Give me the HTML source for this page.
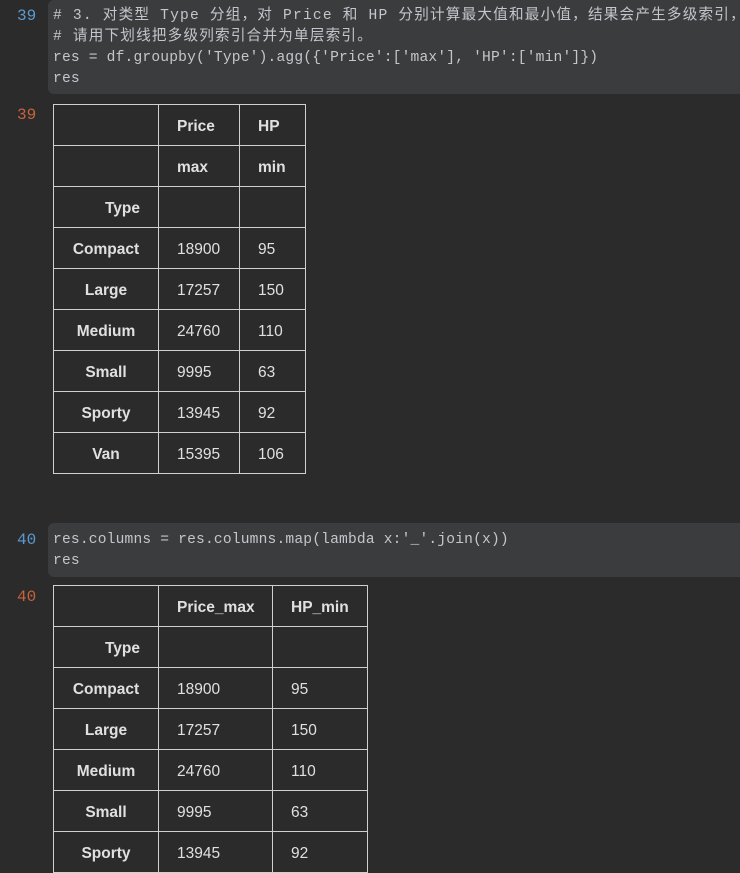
<!DOCTYPE html>
<html><head><meta charset="utf-8"><style>
body{margin:0;background:#2b2b2b;width:740px;height:847px;overflow:hidden;position:relative;font-family:"Liberation Sans","Noto Sans CJK SC",sans-serif}
.code{position:absolute;left:48px;right:0;background:#3b3c3e;border-radius:6px 0 0 6px;font-family:"Liberation Mono","Noto Sans CJK SC",monospace;font-size:14.6px;letter-spacing:0.18px;color:#c3c6cc;padding:6px 0 0 5px;line-height:21px;white-space:pre}
.code .cj{letter-spacing:1.2px}
.n{position:absolute;left:17px;font-family:"Liberation Mono",monospace;font-size:16px}
.in{color:#5b9bd0}.out{color:#c8643c}
table{position:absolute;left:53px;border-collapse:collapse;color:#e0e0e0;font-size:15.5px}
td,th{border:1px solid #d0d0d0;height:41px;padding:4px 0 0 18px;text-align:left;font-weight:normal;box-sizing:border-box}
th{font-weight:bold}
th.i{text-align:center;padding:4px 0 0 0}
th.t{text-align:right;padding:4px 18px 0 0}
</style></head><body>
<div class="n in" style="top:7px">39</div>
<div class="code" style="top:0;height:88px"><span class="cj"># 3. 对类型 Type 分组，对 Price 和 HP 分别计算最大值和最小值，结果会产生多级索引，</span>
<span class="cj"># 请用下划线把多级列索引合并为单层索引。</span>
res = df.groupby('Type').agg({'Price':['max'], 'HP':['min']})
res</div>
<div class="n out" style="top:106px">39</div>
<table style="top:104px">
<colgroup><col style="width:105px"><col style="width:81px"><col style="width:66px"></colgroup>
<tr><th></th><th>Price</th><th>HP</th></tr>
<tr><th></th><th>max</th><th>min</th></tr>
<tr><th class="t">Type</th><td></td><td></td></tr>
<tr><th class="i">Compact</th><td>18900</td><td>95</td></tr>
<tr><th class="i">Large</th><td>17257</td><td>150</td></tr>
<tr><th class="i">Medium</th><td>24760</td><td>110</td></tr>
<tr><th class="i">Small</th><td>9995</td><td>63</td></tr>
<tr><th class="i">Sporty</th><td>13945</td><td>92</td></tr>
<tr><th class="i">Van</th><td>15395</td><td>106</td></tr>
</table>
<div class="n in" style="top:531px">40</div>
<div class="code" style="top:523px;height:47px;padding-top:7px">res.columns = res.columns.map(lambda x:'_'.join(x))
res</div>
<div class="n out" style="top:588px">40</div>
<table style="top:585px">
<colgroup><col style="width:105px"><col style="width:114px"><col style="width:95px"></colgroup>
<tr><th></th><th>Price_max</th><th>HP_min</th></tr>
<tr><th class="t">Type</th><td></td><td></td></tr>
<tr><th class="i">Compact</th><td>18900</td><td>95</td></tr>
<tr><th class="i">Large</th><td>17257</td><td>150</td></tr>
<tr><th class="i">Medium</th><td>24760</td><td>110</td></tr>
<tr><th class="i">Small</th><td>9995</td><td>63</td></tr>
<tr><th class="i">Sporty</th><td>13945</td><td>92</td></tr>
</table>
</body></html>
